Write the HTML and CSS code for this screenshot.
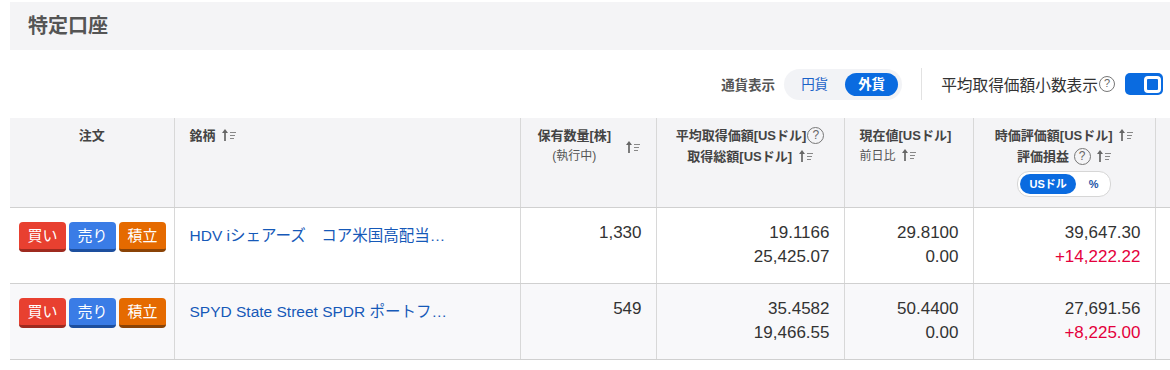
FILE: index.html
```html
<!DOCTYPE html>
<html>
	<head>
		<meta charset="utf-8">
		<title>特定口座</title>
		<link rel="stylesheet" href="styles.css">
	</head>
	<body>
		<div class="page">
			<div class="title-bar">特定口座</div>

			<div class="controls">
				<span class="ctl-label">通貨表示</span>
				<div class="seg">
					<span class="seg-item">円貨</span>
					<span class="seg-item active">外貨</span>
				</div>
				<span class="divider"></span>
				<span class="ctl-text">平均取得価額小数表示</span>
				<span class="help">?</span>
				<span class="toggle"><span class="knob"></span></span>
			</div>

			<table class="holdings">
				<colgroup>
					<col style="width:164px">
					<col style="width:346px">
					<col style="width:136px">
					<col style="width:188px">
					<col style="width:129px">
					<col style="width:182px">
					<col style="width:160px">
				</colgroup>
				<thead>
					<tr>
						<th class="center">注文</th>
						<th class="left">銘柄 <svg class="sort" viewBox="0 0 14 13" width="14" height="13"><path d="M3 13V4" stroke="#666" stroke-width="1.7"/><path d="M0 5L3 1 6 5Z" fill="#666"/><path d="M8 4.5h6M8 7.5h5M8 10.5h4" stroke="#888" stroke-width="1.1"/></svg></th>
						<th>
							<div class="th-flex">
								<div class="th-stack">
									<div>保有数量[株]</div>
									<div class="sub">(執行中)</div>
								</div>
								<svg class="sort" viewBox="0 0 14 13" width="14" height="13"><path d="M3 13V4" stroke="#666" stroke-width="1.7"/><path d="M0 5L3 1 6 5Z" fill="#666"/><path d="M8 4.5h6M8 7.5h5M8 10.5h4" stroke="#888" stroke-width="1.1"/></svg>
							</div>
						</th>
						<th class="center">
							<div>平均取得価額[USドル]<span class="help small">?</span></div>
							<div>取得総額[USドル] <svg class="sort" viewBox="0 0 14 13" width="14" height="13"><path d="M3 13V4" stroke="#666" stroke-width="1.7"/><path d="M0 5L3 1 6 5Z" fill="#666"/><path d="M8 4.5h6M8 7.5h5M8 10.5h4" stroke="#888" stroke-width="1.1"/></svg></div>
						</th>
						<th class="left">
							<div>現在値[USドル]</div>
							<div class="sub">前日比 <svg class="sort" viewBox="0 0 14 13" width="14" height="13"><path d="M3 13V4" stroke="#666" stroke-width="1.7"/><path d="M0 5L3 1 6 5Z" fill="#666"/><path d="M8 4.5h6M8 7.5h5M8 10.5h4" stroke="#888" stroke-width="1.1"/></svg></div>
						</th>
						<th class="center">
							<div>時価評価額[USドル] <svg class="sort" viewBox="0 0 14 13" width="14" height="13"><path d="M3 13V4" stroke="#666" stroke-width="1.7"/><path d="M0 5L3 1 6 5Z" fill="#666"/><path d="M8 4.5h6M8 7.5h5M8 10.5h4" stroke="#888" stroke-width="1.1"/></svg></div>
							<div>評価損益 <span class="help small">?</span> <svg class="sort" viewBox="0 0 14 13" width="14" height="13"><path d="M3 13V4" stroke="#666" stroke-width="1.7"/><path d="M0 5L3 1 6 5Z" fill="#666"/><path d="M8 4.5h6M8 7.5h5M8 10.5h4" stroke="#888" stroke-width="1.1"/></svg></div>
							<div class="mini-seg">
								<span class="mini-item active">USドル</span>
								<span class="mini-item">%</span>
							</div>
						</th>
						<th></th>
					</tr>
				</thead>
				<tbody>
					<tr>
						<td class="orders">
							<span class="btn buy">買い</span><span class="btn sell">売り</span><span class="btn plan">積立</span>
						</td>
						<td class="name"><a href="#">HDV iシェアーズ　コア米国高配当…</a></td>
						<td class="num">1,330</td>
						<td class="num">19.1166<br>25,425.07</td>
						<td class="num">29.8100<br>0.00</td>
						<td class="num">39,647.30<br><span class="plus">+14,222.22</span></td>
						<td></td>
					</tr>
					<tr class="alt">
						<td class="orders">
							<span class="btn buy">買い</span><span class="btn sell">売り</span><span class="btn plan">積立</span>
						</td>
						<td class="name"><a href="#">SPYD State Street SPDR ポートフ…</a></td>
						<td class="num">549</td>
						<td class="num">35.4582<br>19,466.55</td>
						<td class="num">50.4400<br>0.00</td>
						<td class="num">27,691.56<br><span class="plus">+8,225.00</span></td>
						<td></td>
					</tr>
				</tbody>
			</table>
		</div>
	</body>
</html>
```

FILE: styles.css
```css
html, body {
	margin: 0;
	padding: 0;
	background: #fff;
	overflow: hidden;
}

body {
	font-family: "Liberation Sans", "Noto Sans CJK JP", sans-serif;
	color: #333;
}

.page {
	padding: 2px 0 0 10px;
	width: 1400px;
}

.title-bar {
	height: 48px;
	line-height: 48px;
	padding-left: 18px;
	background: #f4f4f6;
	font-size: 20px;
	font-weight: bold;
	color: #555;
}

/* currency / decimal display controls */
.controls {
	width: 1153px;
	display: flex;
	align-items: center;
	justify-content: flex-end;
	height: 32px;
	padding: 18px 0;
}

.ctl-label {
	font-size: 13.5px;
	font-weight: bold;
	color: #555;
	margin-right: 9px;
}

.seg {
	display: flex;
	gap: 4px;
	padding: 4px;
	background: #f2f3f6;
	border-radius: 16px;
}

.seg-item {
	height: 23px;
	line-height: 23px;
	padding: 0 13px;
	border-radius: 12px;
	font-size: 13.5px;
	color: #1a62c8;
}

.seg-item.active {
	background: #0a6be0;
	color: #fff;
	font-weight: bold;
}

.divider {
	width: 1px;
	height: 32px;
	background: #e2e2e2;
	margin: 0 19px;
}

.ctl-text {
	font-size: 15.7px;
	color: #333;
}

.help {
	display: inline-block;
	box-sizing: border-box;
	width: 16px;
	height: 16px;
	border: 1.3px solid #777;
	border-radius: 50%;
	font-size: 11px;
	line-height: 13px;
	text-align: center;
	color: #666;
	font-weight: normal;
	margin-left: 1px;
	vertical-align: middle;
}

.help.small {
	width: 17px;
	height: 17px;
	line-height: 14px;
	font-size: 12px;
	margin-top: -3px;
}

.toggle {
	display: flex;
	justify-content: flex-end;
	align-items: center;
	box-sizing: border-box;
	width: 38px;
	height: 22px;
	padding-right: 2px;
	margin-left: 10px;
	background: #0a6be0;
	border-radius: 5px;
}

.knob {
	box-sizing: border-box;
	width: 17px;
	height: 17px;
	border: 3px solid #fff;
	border-radius: 4px;
	background: #0a6be0;
}

/* holdings table */
.holdings {
	border-collapse: collapse;
	table-layout: fixed;
	width: 1305px;
}

.holdings th {
	height: 82px;
	padding: 7px 15px 0;
	background: #f4f4f6;
	border-right: 1px solid #d8d8d8;
	border-bottom: 1px solid #d0d0d0;
	vertical-align: top;
	font-size: 13px;
	line-height: 21px;
	font-weight: bold;
	color: #444;
	white-space: nowrap;
}

.holdings th.center { text-align: center; }
.holdings th.left { text-align: left; }

.th-flex {
	display: flex;
	align-items: center;
	gap: 12px;
	padding-left: 2px;
}

.th-stack {
	text-align: center;
}

.holdings th .sub {
	font-weight: normal;
	font-size: 12px;
	color: #555;
}

.sort {
	vertical-align: -1px;
	margin-left: 3px;
}

.mini-seg {
	display: inline-flex;
	align-items: center;
	gap: 4px;
	margin-top: 4px;
	padding: 2px;
	height: 20px;
	background: #fff;
	border: 1px solid #d6d6d6;
	border-radius: 12px;
}

.mini-item {
	height: 20px;
	line-height: 20px;
	padding: 0 9px;
	border-radius: 10px;
	font-size: 11px;
	font-weight: bold;
	color: #1a55a8;
}

.mini-item.active {
	background: #0a6be0;
	color: #fff;
}

.holdings tbody tr {
	height: 76px;
}

.holdings td {
	padding: 14px 14px 0;
	border-right: 1px solid #d8d8d8;
	border-bottom: 1px solid #d0d0d0;
	vertical-align: top;
	background: #fff;
}

.holdings tr.alt td {
	background: #f8f8fa;
}

.holdings td.orders {
	padding-left: 9px;
	padding-right: 0;
	white-space: nowrap;
}

.btn {
	display: inline-block;
	box-sizing: border-box;
	width: 47px;
	height: 30px;
	margin-right: 3px;
	border-radius: 4px;
	border-bottom: 3px solid;
	font-size: 15px;
	line-height: 27px;
	text-align: center;
	color: #fff;
}

.btn.buy { background: #e84030; border-color: #9e2a1f; }
.btn.sell { background: #3a7ce6; border-color: #1d4f9e; }
.btn.plan { background: #e56a00; border-color: #8a4306; }

.holdings td.name {
	padding-top: 16px;
	padding-left: 15px;
	font-size: 15.5px;
	line-height: 24px;
	white-space: nowrap;
}

.name a {
	color: #1659b8;
	text-decoration: none;
}

.holdings td.num {
	text-align: right;
	font-size: 17px;
	line-height: 24px;
	color: #333;
	padding-top: 13px;
}

.plus {
	color: #e4003c;
}
```
